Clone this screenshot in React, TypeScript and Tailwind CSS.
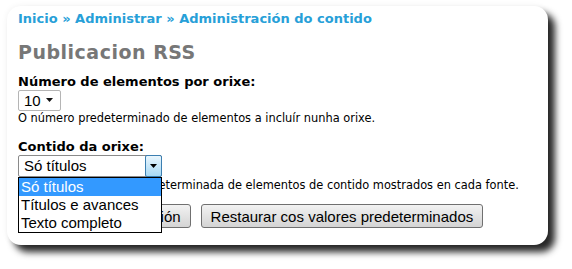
import React from "react";

const verdana = { fontFamily: '"DejaVu Sans", Verdana, sans-serif' };
const arial = { fontFamily: '"Liberation Sans", Arial, sans-serif' };

export default function App() {
  return (
    <div className="w-[572px] h-[269px] bg-white relative overflow-hidden">
      <div
        className="absolute left-[7px] top-[6px] w-[541px] h-[239px] bg-white rounded-[14px] shadow-[7px_7px_7px_rgba(0,0,0,0.85),0_0_6px_rgba(0,0,0,0.06)] px-[11px] pt-[5px]"
        style={verdana}
      >
        <div className="text-[13px] font-bold text-[#27a0d8] leading-[16px]">
          Inicio » Administrar » Administración do contido
        </div>
        <div className="mt-[14px] text-[19px] tracking-[0.5px] font-bold text-[#777777] leading-[22px]">
          Publicacion RSS
        </div>
        <div className="mt-[11px] text-[13px] font-bold text-black leading-[16px]">
          Número de elementos por orixe:
        </div>
        <div className="w-[43px] h-[21px] border border-[#b5b5b5] rounded-[2px] bg-white flex items-center justify-between pl-[5px] pr-[6px]" style={arial}>
          <span className="text-[15px] leading-none text-black">10</span>
          <svg width="8" height="5" viewBox="0 0 8 5"><path d="M0 0h7L3.5 4z" fill="#111" /></svg>
        </div>
        <div className="text-[11.4px] text-black leading-[14px]">
          O número predeterminado de elementos a incluír nunha orixe.
        </div>
        <div className="mt-[14px] text-[13px] font-bold text-black leading-[16px]">
          Contido da orixe:
        </div>
        <div className="relative w-[144px]">
          <div className="h-[22px] border border-[#8a8a8a] rounded-[2px] bg-white flex items-stretch" style={arial}>
            <span className="flex-1 pl-[5px] text-[15px] leading-[20px] text-black">Só títulos</span>
            <div className="w-[17px] my-[-1px] mr-[-1px] border border-[#3c7fb1] rounded-[2px] bg-gradient-to-b from-[#eaf6fd] to-[#a7d9f5] flex items-center justify-center">
              <svg width="8" height="5" viewBox="0 0 8 5"><path d="M0 0h7L3.5 4z" fill="#000" /></svg>
            </div>
          </div>
          <div className="absolute left-0 top-[22px] w-[144px] border border-black bg-white z-10 text-[15px] leading-[18px]" style={arial}>
            <div className="bg-[#3399ff] text-white pl-[2px] h-[18px]">Só títulos</div>
            <div className="text-black pl-[2px] h-[18px]">Títulos e avances</div>
            <div className="text-black pl-[2px] h-[18px]">Texto completo</div>
          </div>
        </div>
        <div className="mt-[1px] text-[11.4px] text-black leading-[14px] whitespace-nowrap">
          Configuración xeral predeterminada de elementos de contido mostrados en cada fonte.
        </div>
        <div className="mt-[12px] flex gap-[10px]" style={arial}>
          <button className="h-[24px] px-[9px] border border-[#707070] rounded-[3px] bg-gradient-to-b from-[#f2f2f2] to-[#d4d4d4] text-[15px] text-black leading-none">
            Gardar a configuración
          </button>
          <button className="h-[24px] px-[9px] border border-[#707070] rounded-[3px] bg-gradient-to-b from-[#f2f2f2] to-[#d4d4d4] text-[15px] text-black leading-none">
            Restaurar cos valores predeterminados
          </button>
        </div>
      </div>
    </div>
  );
}
